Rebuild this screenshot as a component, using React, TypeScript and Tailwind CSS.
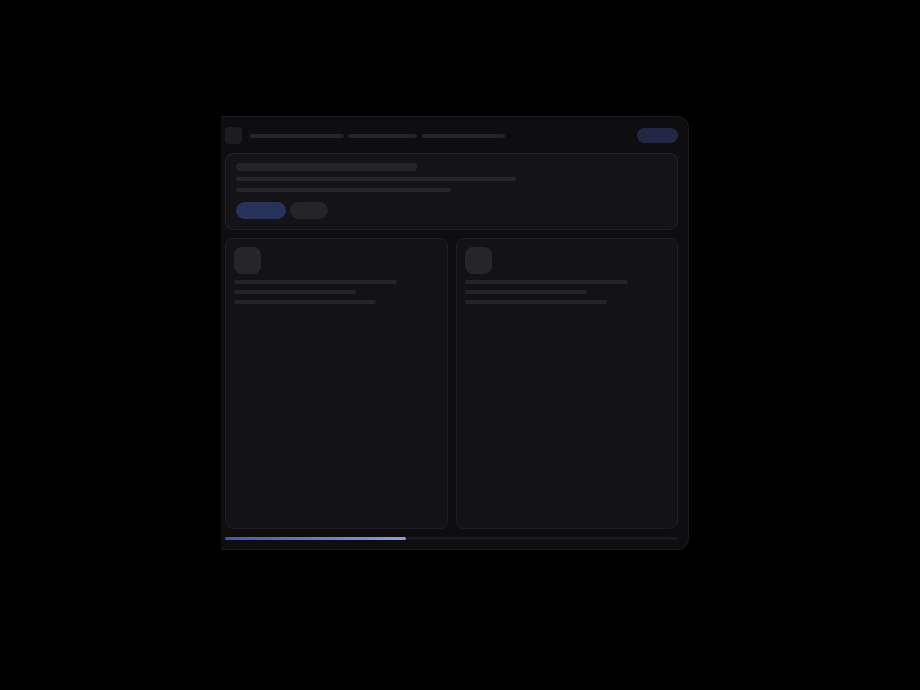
function Bar({ className = "" }: { className?: string }) {
  return <div className={`rounded-full bg-[#252528] ${className}`} />;
}

function FeatureCard({ dim = false }: { dim?: boolean }) {
  return (
    <div className="rounded-lg border border-[#1f1f22] bg-[#131315] p-[8px]">
      <div className="h-[27px] w-[27px] rounded-lg bg-[#262628]" />
      <div className="mt-[6px] flex flex-col gap-[6px]">
        <Bar className={`h-[4px] w-[163px] ${dim ? "bg-[#232326]" : ""}`} />
        <Bar className={`h-[4px] w-[122px] ${dim ? "bg-[#1f1f22]" : ""}`} />
        <Bar className="h-[4px] w-[142px] bg-[#1e1e21]" />
      </div>
    </div>
  );
}

export default function App() {
  return (
    <div className="min-h-screen w-full bg-black pl-[221px] pt-[116px]">
      <div className="flex h-[434px] w-[468px] flex-col rounded-r-xl border border-l-0 border-[#1a1a1d] bg-[#0e0e10] pb-[10px] pl-[4px] pr-[10px] pt-[10px]">
        {/* top bar */}
        <div className="flex h-[17px] shrink-0 items-center">
          <div className="h-[17px] w-[17px] rounded-[4px] bg-[#1d1d20]" />
          <div className="ml-[8px] flex items-center gap-[4px]">
            <Bar className="h-[4px] w-[94px] bg-[#222225]" />
            <Bar className="h-[4px] w-[69px] bg-[#222225]" />
            <Bar className="ml-[1px] h-[4px] w-[83px] bg-[#222225]" />
          </div>
          <div className="ml-auto h-[15px] w-[41px] rounded-full bg-[#212845]" />
        </div>

        {/* hero */}
        <div className="mt-[9px] h-[77px] shrink-0 rounded-lg border border-[#222225] bg-[#141416] px-[10px] pt-[9px]">
          <Bar className="h-[8px] w-[181px] bg-[#2a2a2d]" />
          <Bar className="mt-[6px] h-[4px] w-[280px] bg-[#252528]" />
          <Bar className="mt-[7px] h-[4px] w-[215px] bg-[#202023]" />
          <div className="mt-[10px] flex gap-[4px]">
            <div className="h-[17px] w-[50px] rounded-full bg-[#27325a]" />
            <div className="h-[17px] w-[38px] rounded-full bg-[#252527]" />
          </div>
        </div>

        {/* cards */}
        <div className="mt-[8px] grid h-[291px] shrink-0 grid-cols-2 gap-[8px]">
          <FeatureCard />
          <FeatureCard dim />
        </div>

        {/* progress */}
        <div className="mt-[8px] h-[3px] w-full shrink-0 rounded-full bg-[#18181b]">
          <div className="h-full w-[40%] rounded-full bg-gradient-to-r from-[#4257b0] to-[#8b9de6]" />
        </div>
      </div>
    </div>
  );
}
